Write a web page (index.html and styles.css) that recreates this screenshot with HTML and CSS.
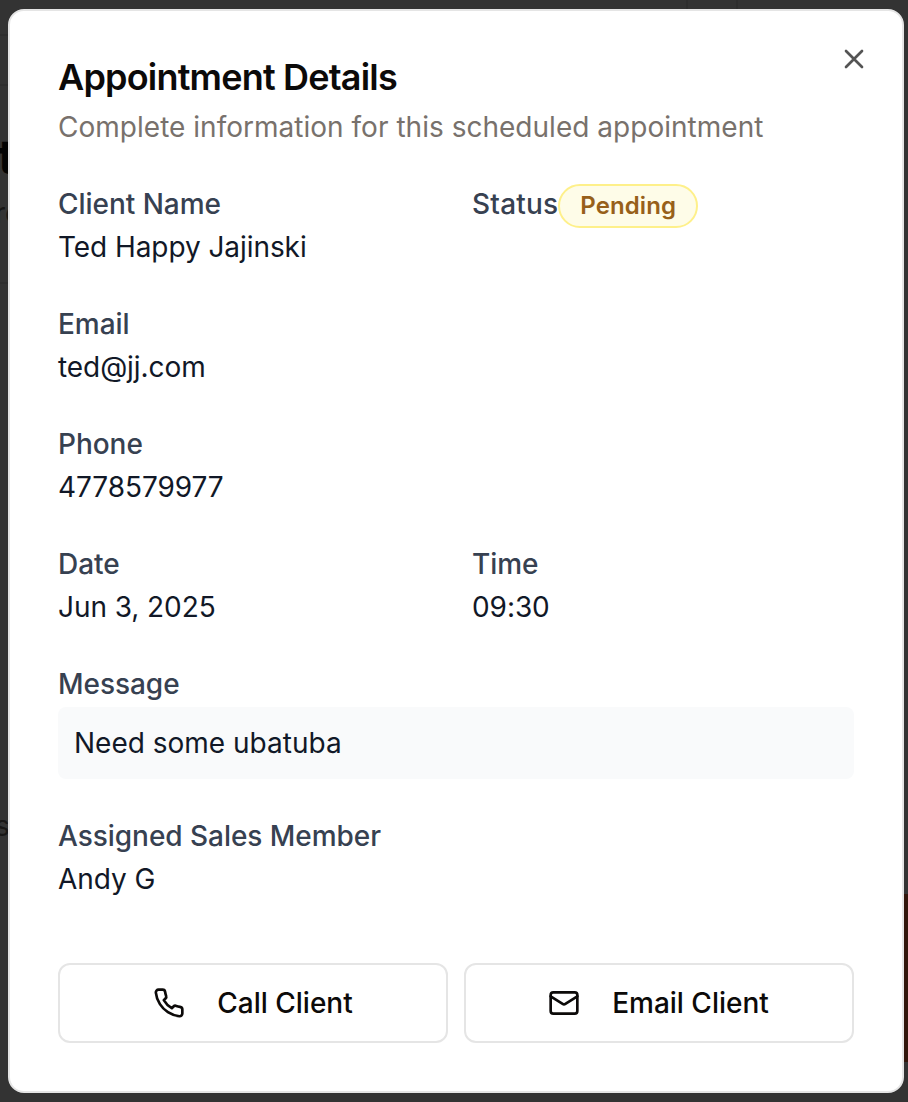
FILE: index.html
```
<!DOCTYPE html>
<html lang="en">
<head>
<meta charset="utf-8">
<title>Appointment Details</title>
<link rel="stylesheet" href="styles.css">
</head>
<body>
<div class="behind behind-title" aria-hidden="true">t</div>
<div class="behind behind-sub" aria-hidden="true">re</div>
<div class="behind behind-note" aria-hidden="true">s</div>
<div class="rule rule-a"></div>
<div class="rule rule-b"></div>
<div class="rule rule-c"></div>
<div class="divider"></div>
<div class="behind-image"></div>
<main class="dialog">
  <button class="close" aria-label="Close"><svg viewBox="0 0 24 24"><path d="M18 6 6 18M6 6l12 12"/></svg></button>
  <header>
    <h1>Appointment Details</h1>
    <p class="subtitle">Complete information for this scheduled appointment</p>
  </header>
  <section class="grid">
    <div class="field"><span class="label">Client Name</span><span class="value">Ted Happy Jajinski</span></div>
    <div class="status"><span class="label">Status</span><span class="badge">Pending</span></div>
    <div class="field wide"><span class="label">Email</span><span class="value">ted@jj.com</span></div>
    <div class="field wide"><span class="label">Phone</span><span class="value">4778579977</span></div>
    <div class="field"><span class="label">Date</span><span class="value">Jun 3, 2025</span></div>
    <div class="field"><span class="label">Time</span><span class="value">09:30</span></div>
    <div class="field wide"><span class="label">Message</span><span class="value message">Need some ubatuba</span></div>
    <div class="field wide"><span class="label">Assigned Sales Member</span><span class="value">Andy G</span></div>
  </section>
  <footer class="actions">
    <button class="action"><svg viewBox="0 0 24 24"><path d="M22 16.92v3a2 2 0 0 1-2.18 2 19.79 19.79 0 0 1-8.63-3.07 19.5 19.5 0 0 1-6-6 19.79 19.79 0 0 1-3.07-8.67A2 2 0 0 1 4.11 2h3a2 2 0 0 1 2 1.72 12.84 12.84 0 0 0 .7 2.81 2 2 0 0 1-.45 2.11L8.09 9.91a16 16 0 0 0 6 6l1.27-1.27a2 2 0 0 1 2.11-.45 12.84 12.84 0 0 0 2.81.7A2 2 0 0 1 22 16.92z"/></svg><span>Call Client</span></button>
    <button class="action email"><svg viewBox="0 0 24 24"><rect width="20" height="16" x="2" y="4" rx="2"/><path d="m22 7-8.97 5.7a1.94 1.94 0 0 1-2.06 0L2 7"/></svg><span>Email Client</span></button>
  </footer>
</main>
</body>
</html>
```
FILE: styles.css
```
* { box-sizing: border-box; }
body {
  margin: 0;
  height: 1102px;
  padding: 9px 4px 9px 8px;
  overflow: hidden;
  position: relative;
  background: #333;
  font-family: Inter, sans-serif;
}
.dialog {
  position: relative;
  height: 1084px;
  padding: 48px 48px 0;
  border: 2px solid #e5e5e5;
  border-radius: 16px;
  background: #fff;
}
.behind { position: absolute; color: #020202; }
.behind-title { left: -2px; top: 128px; font-size: 48px; line-height: 58px; font-weight: 700; }
.behind-sub { left: -5px; top: 196px; font-size: 28px; line-height: 34px; color: #171615; }
.behind-note { left: -5px; top: 809px; font-size: 28px; line-height: 34px; color: #171615; }
.behind-image { position: absolute; right: 0; top: 894px; width: 8px; height: 168px; background: #32160b; }
.rule { position: absolute; left: 0; width: 8px; height: 2px; background: #2e2e2e; }
.rule-a { top: 34px; }
.rule-b { top: 84px; }
.rule-c { top: 282px; }
.divider { position: absolute; left: 686px; top: 0; width: 52px; height: 12px; border: solid #2e2e2e; border-width: 0 2px; }
.close {
  position: absolute;
  top: 32px;
  right: 32px;
  width: 32px;
  height: 32px;
  padding: 0;
  border: 0;
  background: none;
}
svg { width: 32px; height: 32px; fill: none; stroke: currentColor; stroke-width: 2; stroke-linecap: round; stroke-linejoin: round; display: block; }
.close svg { color: #545454; }
h1 { margin: 0; font-size: 36px; line-height: 36px; font-weight: 600; letter-spacing: -0.8px; color: #0c0a09; }
.subtitle { margin: 12px 0 0; font-size: 28px; line-height: 40px; letter-spacing: 0.02px; color: #78716c; }
.grid { display: grid; grid-template-columns: 1fr 1fr; gap: 37px 32px; margin-top: 37px; }
.field { display: flex; flex-direction: column; gap: 3px; }
.wide { grid-column: 1 / -1; }
.label, .value { font-size: 28px; line-height: 40px; }
.label { font-weight: 500; letter-spacing: -0.04px; color: #374151; }
.value { color: #111827; letter-spacing: -0.07px; }
.status { display: flex; align-items: flex-start; }
.status .label { letter-spacing: 0.2px; }
.badge { height: 44px; padding: 2px 20px; border: 2px solid #fef08a; border-radius: 22px; background: #fefce8; color: #97601a; font-size: 24px; line-height: 36px; font-weight: 600; letter-spacing: 0.1px; }
.message { padding: 16px; border-radius: 8px; background: #f9fafb; letter-spacing: 0; }
.actions { display: grid; grid-template-columns: 1fr 1fr; gap: 16px; margin-top: 64px; }
.action { display: flex; align-items: center; justify-content: center; gap: 32px; height: 80px; padding: 0; border: 2px solid #e5e5e5; border-radius: 12px; background: #fff; color: #0c0a09; font: 500 28px/40px Inter, sans-serif; }
.email { padding-right: 1px; }
```
